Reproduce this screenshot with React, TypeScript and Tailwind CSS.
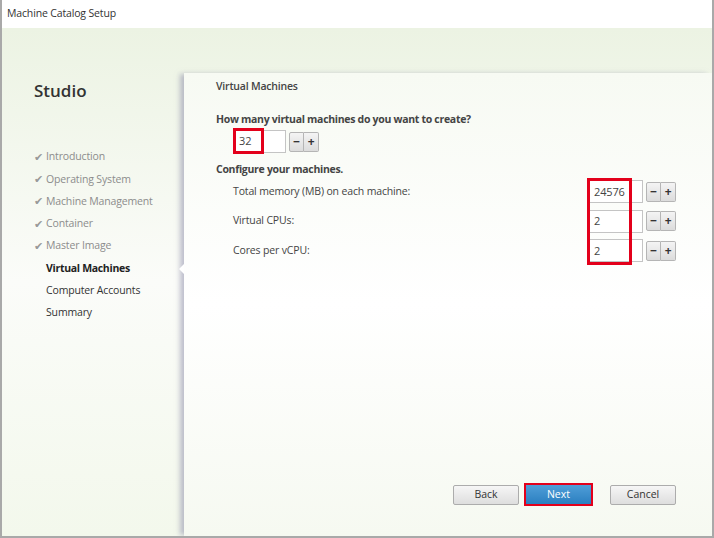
import React from "react";

function Spin({ value, w = "w-[52px]" }: { value: string; w?: string }) {
  return (
    <div className="flex items-center">
      <div className={`${w} h-[23px] bg-white border border-[#c4c4c4] flex items-center pl-[4px] text-[11px] text-[#444]`}>
        {value}
      </div>
      <div className="flex ml-[3px]">
        <div className="w-[15px] h-[20px] border border-[#b5b5b5] rounded-l-[2px] bg-gradient-to-b from-[#f4f4f4] to-[#dcdcdc] flex items-center justify-center text-[12px] font-bold text-[#333] leading-none">
          −
        </div>
        <div className="w-[15px] h-[20px] border border-l-0 border-[#b5b5b5] rounded-r-[2px] bg-gradient-to-b from-[#f4f4f4] to-[#dcdcdc] flex items-center justify-center text-[12px] font-bold text-[#333] leading-none">
          +
        </div>
      </div>
    </div>
  );
}

export default function App() {
  const done = ["Introduction", "Operating System", "Machine Management", "Container", "Master Image"];
  return (
    <div
      className="w-[714px] h-[538px] flex flex-col border-x-2 border-b-2 border-[#a9a9a9] overflow-hidden text-[10.5px] tracking-[-0.15px]"
      style={{ fontFamily: '"Open Sans", "Noto Sans", sans-serif' }}
    >
      <div className="h-[28px] bg-white flex items-center pl-[5px] text-[#333] shrink-0">
        Machine Catalog Setup
      </div>
      <div className="flex-1 flex bg-gradient-to-b from-[#ecf3e3] via-[#fbfcf9] to-[#f3f8ec]">
        <div className="w-[182px] shrink-0 pl-[32px] pt-[51px]">
          <div className="text-[17px] font-semibold text-[#333] leading-[24px] tracking-normal">Studio</div>
          <div className="mt-[43px] flex flex-col">
            {done.map((d) => (
              <div key={d} className="h-[22.3px] flex items-center text-[#8c8c8c]">
                <span className="w-[12px] text-[11px] text-[#999]">✔</span>
                <span>{d}</span>
              </div>
            ))}
            <div className="h-[22.3px] flex items-center pl-[12px] font-bold text-[#222] tracking-[-0.3px]">Virtual Machines</div>
            <div className="h-[22.3px] flex items-center pl-[12px] text-[#333]">Computer Accounts</div>
            <div className="h-[22.3px] flex items-center pl-[12px] text-[#333]">Summary</div>
          </div>
        </div>
        <div className="flex-1 mt-[45px] relative flex flex-col bg-gradient-to-b from-[#f7faf3] via-white to-[#f6f9f1] shadow-[-5px_0_5px_-1px_rgba(140,140,170,0.55)]">
          <div className="absolute left-[-5px] top-[191px] w-0 h-0 border-y-[5px] border-y-transparent border-r-[5px] border-r-white" />
          <div className="pl-[32px] pr-[36px] pt-[5px] flex flex-col text-[#444]">
            <div className="font-semibold text-[#444] leading-[16px] tracking-[-0.2px]">Virtual Machines</div>
            <div className="mt-[17px] font-bold leading-[16px] tracking-[-0.3px]">How many virtual machines do you want to create?</div>
            <div className="mt-[3px] pl-[18px] relative">
              <Spin value="32" />
              <div className="absolute left-[17px] top-[-2px] w-[31px] h-[26px] border-[3px] border-[#e3001b]" />
            </div>
            <div className="mt-[8px] font-bold leading-[16px] tracking-[-0.3px]">Configure your machines.</div>
            <div className="relative">
              <div className="flex flex-col">
                {[
                  ["Total memory (MB) on each machine:", "24576"],
                  ["Virtual CPUs:", "2"],
                  ["Cores per vCPU:", "2"],
                ].map(([l, v]) => (
                  <div key={l} className="h-[29.5px] flex items-center justify-between pl-[17px]">
                    <span className="text-[#444]">{l}</span>
                    <Spin value={v} w="w-[54px]" />
                  </div>
                ))}
              </div>
              <div className="absolute right-[44px] top-[1px] w-[45px] h-[87px] border-[3px] border-[#e3001b]" />
            </div>
          </div>
          <div className="flex-1" />
          <div className="flex items-center justify-end pr-[36px] pb-[30px] tracking-normal">
            <div className="w-[66px] h-[20px] border border-[#acacac] rounded-[2px] bg-gradient-to-b from-[#f6f6f6] to-[#dedede] flex items-center justify-center text-[#333]">
              Back
            </div>
            <div className="ml-[5px] p-[2px] bg-[#e3001b]">
              <div className="w-[65px] h-[19px] bg-gradient-to-b from-[#4f9ed8] to-[#2a7fc0] flex items-center justify-center text-white">
                Next
              </div>
            </div>
            <div className="ml-[17px] w-[66px] h-[20px] border border-[#acacac] rounded-[2px] bg-gradient-to-b from-[#f6f6f6] to-[#dedede] flex items-center justify-center text-[#333]">
              Cancel
            </div>
          </div>
        </div>
      </div>
    </div>
  );
}
